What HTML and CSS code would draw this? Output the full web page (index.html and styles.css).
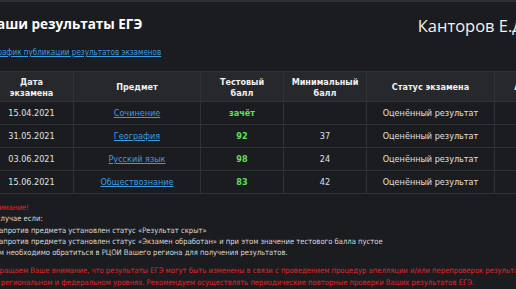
FILE: index.html
```html
<!DOCTYPE html>
<html lang="ru">
<head>
<meta charset="utf-8">
<link rel="stylesheet" href="styles.css">
</head>
<body>
<div class="topline"></div>
<div class="page">
  <div class="head">
    <h1 class="title">Ваши результаты ЕГЭ</h1>
    <div class="user">Канторов Е.Д.</div>
  </div>
  <a class="schedule" href="#">График публикации результатов экзаменов</a>
  <table class="results">
    <thead>
      <tr>
        <th class="c-date">Дата<br>экзамена</th>
        <th class="c-subj">Предмет</th>
        <th class="c-score">Тестовый<br>балл</th>
        <th class="c-min">Минимальный<br>балл</th>
        <th class="c-status">Статус экзамена</th>
        <th class="c-app">Апелляция</th>
      </tr>
    </thead>
    <tbody>
      <tr>
        <td>15.04.2021</td>
        <td><a href="#">Сочинение</a></td>
        <td class="score">зачёт</td>
        <td></td>
        <td class="status">Оценённый результат</td>
        <td></td>
      </tr>
      <tr>
        <td>31.05.2021</td>
        <td><a href="#">География</a></td>
        <td class="score">92</td>
        <td class="min">37</td>
        <td class="status">Оценённый результат</td>
        <td></td>
      </tr>
      <tr>
        <td>03.06.2021</td>
        <td><a href="#">Русский язык</a></td>
        <td class="score">98</td>
        <td class="min">24</td>
        <td class="status">Оценённый результат</td>
        <td></td>
      </tr>
      <tr>
        <td>15.06.2021</td>
        <td><a href="#">Обществознание</a></td>
        <td class="score">83</td>
        <td class="min">42</td>
        <td class="status">Оценённый результат</td>
        <td></td>
      </tr>
    </tbody>
  </table>
  <div class="notes">
    <p class="warn">Внимание!</p>
    <p>В случае если:</p>
    <p>- напротив предмета установлен статус «Результат скрыт»</p>
    <p>- напротив предмета установлен статус «Экзамен обработан» и при этом значение тестового балла пустое</p>
    <p>Вам необходимо обратиться в РЦОИ Вашего региона для получения результатов.</p>
    <p class="alert">Обращаем Ваше внимание, что результаты ЕГЭ могут быть изменены в связи с проведением процедур апелляции и/или перепроверок результатов<br>на региональном и федеральном уровнях. Рекомендуем осуществлять периодические повторные проверки Ваших результатов ЕГЭ.</p>
  </div>
</div>
</body>
</html>
```
FILE: styles.css
```css
html, body {
  margin: 0;
  padding: 0;
  background: #1b1c1f;
  overflow: hidden;
}
body {
  color: #e6e6e6;
  font-family: "DejaVu Sans Condensed", "DejaVu Sans", sans-serif;
  font-stretch: condensed;
}
.topline {
  height: 2px;
  background: #2e2f33;
}
.page {
  margin-left: -12px;
  width: 620px;
}
.head {
  display: flex;
  align-items: flex-end;
  width: 540px;
  padding-top: 13px;
}
.title {
  margin: 0;
  font-family: "Open Sans", sans-serif;
  font-stretch: normal;
  font-weight: 700;
  font-size: 13.5px;
  color: #ffffff;
  flex: 1;
  line-height: 18px;
}
.user {
  font-family: "Open Sans", sans-serif;
  font-stretch: normal;
  font-size: 16.5px;
  color: #f2f2f2;
  line-height: 20px;
  margin-bottom: -3px;
}
.schedule {
  display: block;
  margin-top: 14px;
  margin-left: 5px;
  font-size: 8px;
  color: #3d9be0;
  line-height: 12px;
}
.results {
  margin-top: 12px;
  margin-left: 1px;
  border-collapse: collapse;
  font-size: 9px;
  color: #e0e0e0;
}
.results th, .results td {
  border: 1px solid #2f3134;
  text-align: center;
  padding: 0;
}
.results th {
  background: #26282b;
  font-weight: 700;
  height: 27px;
  padding-top: 2px;
  line-height: 11px;
  color: #f0f0f0;
}
.results td {
  height: 22px;
}
.c-date { width: 83px; }
.c-subj { width: 126px; }
.c-score { width: 82px; }
.c-min { width: 82px; }
.c-status { width: 127px; }
.c-app { width: 90px; }
.results a {
  color: #3d9be0;
}
.score {
  color: #5ee05a;
  font-weight: 700;
}
.notes {
  margin-top: 8px;
  padding-left: 2px;
  font-size: 7.6px;
  line-height: 11.25px;
  color: #d8d8d8;
  white-space: nowrap;
}
.notes p {
  margin: 0;
}
.warn {
  color: #e0262a;
}
.alert {
  color: #e0262a;
  margin-top: 7px !important;
  line-height: 12px;
}
```
